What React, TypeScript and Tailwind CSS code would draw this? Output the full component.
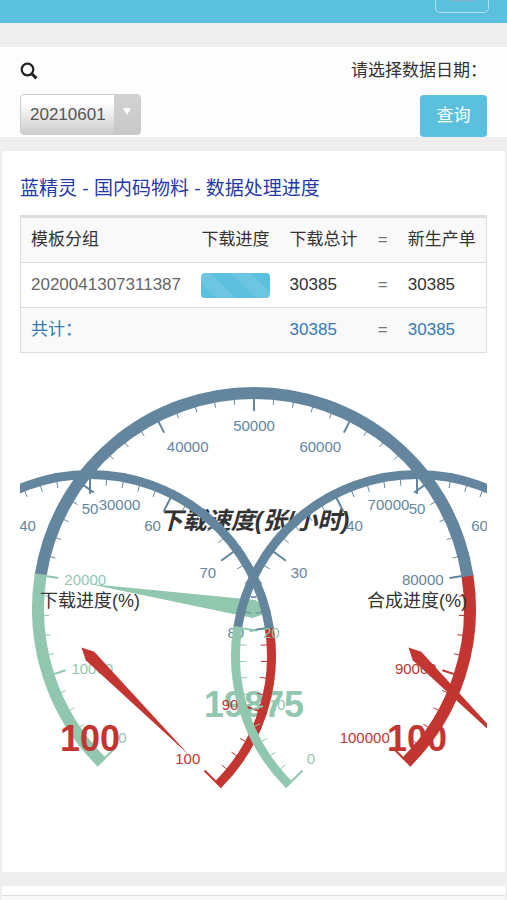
import React from "react";

const GREEN = "#91c7ae";
const BLUE = "#63869e";
const RED = "#c23531";

const CANVAS_WIDTH = 467;

type GaugeProps = {
  cx: number;
  cy: number;
  r: number;
  band: number;
  tick: number;
  max: number;
  value: number;
  pointerWidth: number;
  title: string;
  titleDy: number;
  titleClass: string;
  detailDy: number;
};

const rad = (deg: number) => (deg * Math.PI) / 180;

function colorAt(fraction: number) {
  if (fraction <= 0.2) return GREEN;
  if (fraction <= 0.8) return BLUE;
  return RED;
}

function Gauge(props: GaugeProps) {
  const { cx, cy, r, band, tick, max, value, pointerWidth, title, titleDy, titleClass, detailDy } = props;
  const mid = r - band / 2;
  // 0 sits at the lower left, the maximum at the lower right.
  const point = (fraction: number, radius: number) => {
    const a = rad(135 + 270 * fraction);
    return [cx + Math.cos(a) * radius, cy + Math.sin(a) * radius];
  };
  const arc = (from: number, to: number) => {
    const [x1, y1] = point(from, mid);
    const [x2, y2] = point(to, mid);
    const large = (to - from) * 270 > 180 ? 1 : 0;
    return `M${x1} ${y1}A${mid} ${mid} 0 ${large} 1 ${x2} ${y2}`;
  };
  const ticks = Array.from({ length: 51 }, (_, i) => i);
  // Labels that would fall wholly outside the canvas are left out.
  const labels = Array.from({ length: 11 }, (_, i) => i).filter((i) => {
    const [x] = point(i / 10, r - 30);
    return x > -10 && x < CANVAS_WIDTH + 10;
  });

  const a = rad(135 + 270 * (value / max));
  const c = Math.cos(a);
  const s = Math.sin(a);
  const w = pointerWidth;
  const len = r * 0.755;
  const pointer = [
    [cx - c * w * 2, cy - s * w * 2],
    [cx + s * w, cy - c * w],
    [cx + c * len, cy + s * len],
    [cx - s * w, cy + c * w],
  ];
  const valueColor = colorAt(value / max);

  return (
    <g>
      <path d={arc(0, 0.2)} stroke={GREEN} strokeWidth={band} fill="none" />
      <path d={arc(0.2, 0.8)} stroke={BLUE} strokeWidth={band} fill="none" />
      <path d={arc(0.8, 1)} stroke={RED} strokeWidth={band} fill="none" />
      {ticks.map((i) => {
        const f = i / 50;
        const major = i % 5 === 0;
        const [x1, y1] = point(f, r);
        const [x2, y2] = point(f, r - (major ? 24 : tick));
        return (
          <line key={i} x1={x1} y1={y1} x2={x2} y2={y2} stroke={colorAt(f)} strokeWidth={major ? 2 : 1} />
        );
      })}
      {labels.map((i) => {
        const f = i / 10;
        const [x, y] = point(f, r - 30);
        const ux = Math.cos(rad(135 + 270 * f));
        const uy = Math.sin(rad(135 + 270 * f));
        const anchor = ux < -0.4 ? "start" : ux > 0.4 ? "end" : "middle";
        const dy = uy < -0.4 ? 14 : uy > 0.4 ? -2 : 6;
        return (
          <text key={i} x={x} y={y + dy} textAnchor={anchor} fill={colorAt(f)} className="text-[15px]">
            {(max / 10) * i}
          </text>
        );
      })}
      <polygon points={pointer.map((p) => p.join(",")).join(" ")} fill={valueColor} />
      <text x={cx} y={cy + titleDy} textAnchor="middle" fill="#333" className={titleClass}>
        {title}
      </text>
      <text x={cx} y={cy + detailDy} textAnchor="middle" fill={valueColor} className="text-[36px] font-bold">
        {value}
      </text>
    </g>
  );
}

export default function App() {
  return (
    <div className="min-h-screen overflow-hidden bg-[#eee] font-['Liberation_Sans','Noto_Sans_CJK_SC',sans-serif] text-[17px] leading-6 text-[#333]">
      <header className="flex h-[23px] items-end justify-end overflow-hidden bg-[#5bc0de] px-[18px] pb-[10px]">
        <button
          type="button"
          aria-label="菜单"
          className="flex h-10 w-[54px] shrink-0 flex-col items-center justify-end gap-1 rounded-[5px] border border-[#b4e0ee] pb-[11px]"
        >
          <span className="h-[2px] w-6 bg-[#8ab4c2]" />
          <span className="h-[2px] w-6 bg-[#8ab4c2]" />
          <span className="h-[2px] w-6 bg-[#8ab4c2]" />
        </button>
      </header>

      <section className="mt-6 bg-[#fdfdfd] px-5 pt-3">
        <div className="flex items-center justify-between">
          <svg viewBox="0 0 18 18" className="size-[18px]" fill="none" stroke="#222">
            <circle cx="7.5" cy="7.5" r="5.8" strokeWidth="2.2" />
            <path d="M11.8 11.8L16.4 16.4" strokeWidth="3" />
          </svg>
          <label htmlFor="date">请选择数据日期：</label>
        </div>
        <div className="flex items-end justify-between pt-[11px]">
          <div className="relative mb-[2px]">
            <select
              id="date"
              className="block h-[41px] w-[121px] appearance-none rounded-[4px] border border-[#ccc] bg-linear-to-b from-white from-20% to-[#ccc] pl-[9px] text-[17px] text-[#555]"
            >
              <option>20210601</option>
            </select>
            <span className="pointer-events-none absolute inset-y-px right-px flex w-[26px] justify-center rounded-r-[3px] bg-linear-to-b from-[#d2d2d2] to-[#c8c8c8] pt-[13px]">
              <span className="size-0 border-x-[4px] border-t-[7px] border-x-transparent border-t-white" />
            </span>
          </div>
          <button type="button" className="h-[42px] w-[67px] rounded-[4px] bg-[#5bc0de] text-white">
            查询
          </button>
        </div>
      </section>

      <main className="mx-[2px] mt-[14px] bg-white px-[18px] pt-[26px] pb-[11px]">
        <h1 className="text-[19px] text-[#1f3aa8]">蓝精灵 - 国内码物料 - 数据处理进度</h1>
        <table className="mt-[14px] w-full border-collapse border border-[#ddd] text-left">
          <thead>
            <tr className="border-t-[3px] border-b border-[#ddd] bg-[#f9f9f9]">
              <th className="px-[10px] py-[10px] font-normal">模板分组</th>
              <th className="px-[10px] font-normal">下载进度</th>
              <th className="px-[10px] font-normal">下载总计</th>
              <th className="px-[10px] font-normal text-[#777]">=</th>
              <th className="px-[10px] font-normal">新生产单</th>
            </tr>
          </thead>
          <tbody>
            <tr className="border-b border-[#ddd]">
              <td className="px-[10px] py-[10px] text-[#666]">2020041307311387</td>
              <td className="px-[10px]">
                <div className="h-[25px] rounded-[4px] bg-[#5bc0de] bg-[linear-gradient(45deg,rgba(255,255,255,.1)_25%,transparent_25%,transparent_50%,rgba(255,255,255,.1)_50%,rgba(255,255,255,.1)_75%,transparent_75%,transparent)] bg-[length:40px_40px] bg-[position:-10px_0]" />
              </td>
              <td className="px-[10px]">30385</td>
              <td className="px-[10px] text-[#777]">=</td>
              <td className="px-[10px]">30385</td>
            </tr>
            <tr className="bg-[#f9f9f9] text-[#337ab7]">
              <td className="px-[10px] py-[10px]">共计：</td>
              <td />
              <td className="px-[10px]">30385</td>
              <td className="px-[10px] text-[#777]">=</td>
              <td className="px-[10px]">30385</td>
            </tr>
          </tbody>
        </table>

        <svg viewBox="0 0 467 490" className="mt-[18px] block w-full overflow-hidden">
          <Gauge
            cx={234}
            cy={238}
            r={222}
            band={12}
            tick={17}
            max={100000}
            value={19875}
            pointerWidth={9}
            title="下载速度(张/小时)"
            titleDy={-80}
            titleClass="text-[24px] font-bold italic"
            detailDy={108}
          />
          <Gauge
            cx={70}
            cy={285}
            r={186}
            band={9}
            tick={15}
            max={100}
            value={100}
            pointerWidth={6}
            title="下载进度(%)"
            titleDy={-49}
            titleClass="text-[18px]"
            detailDy={95}
          />
          <Gauge
            cx={397}
            cy={285}
            r={186}
            band={9}
            tick={15}
            max={100}
            value={100}
            pointerWidth={6}
            title="合成进度(%)"
            titleDy={-49}
            titleClass="text-[18px]"
            detailDy={95}
          />
        </svg>
      </main>

      <footer className="mx-[2px] mt-[14px] h-[15px] bg-white pt-[9px]">
        <div className="h-[6px] border-t border-[#ddd] bg-[#f8f8f8]" />
      </footer>
    </div>
  );
}
